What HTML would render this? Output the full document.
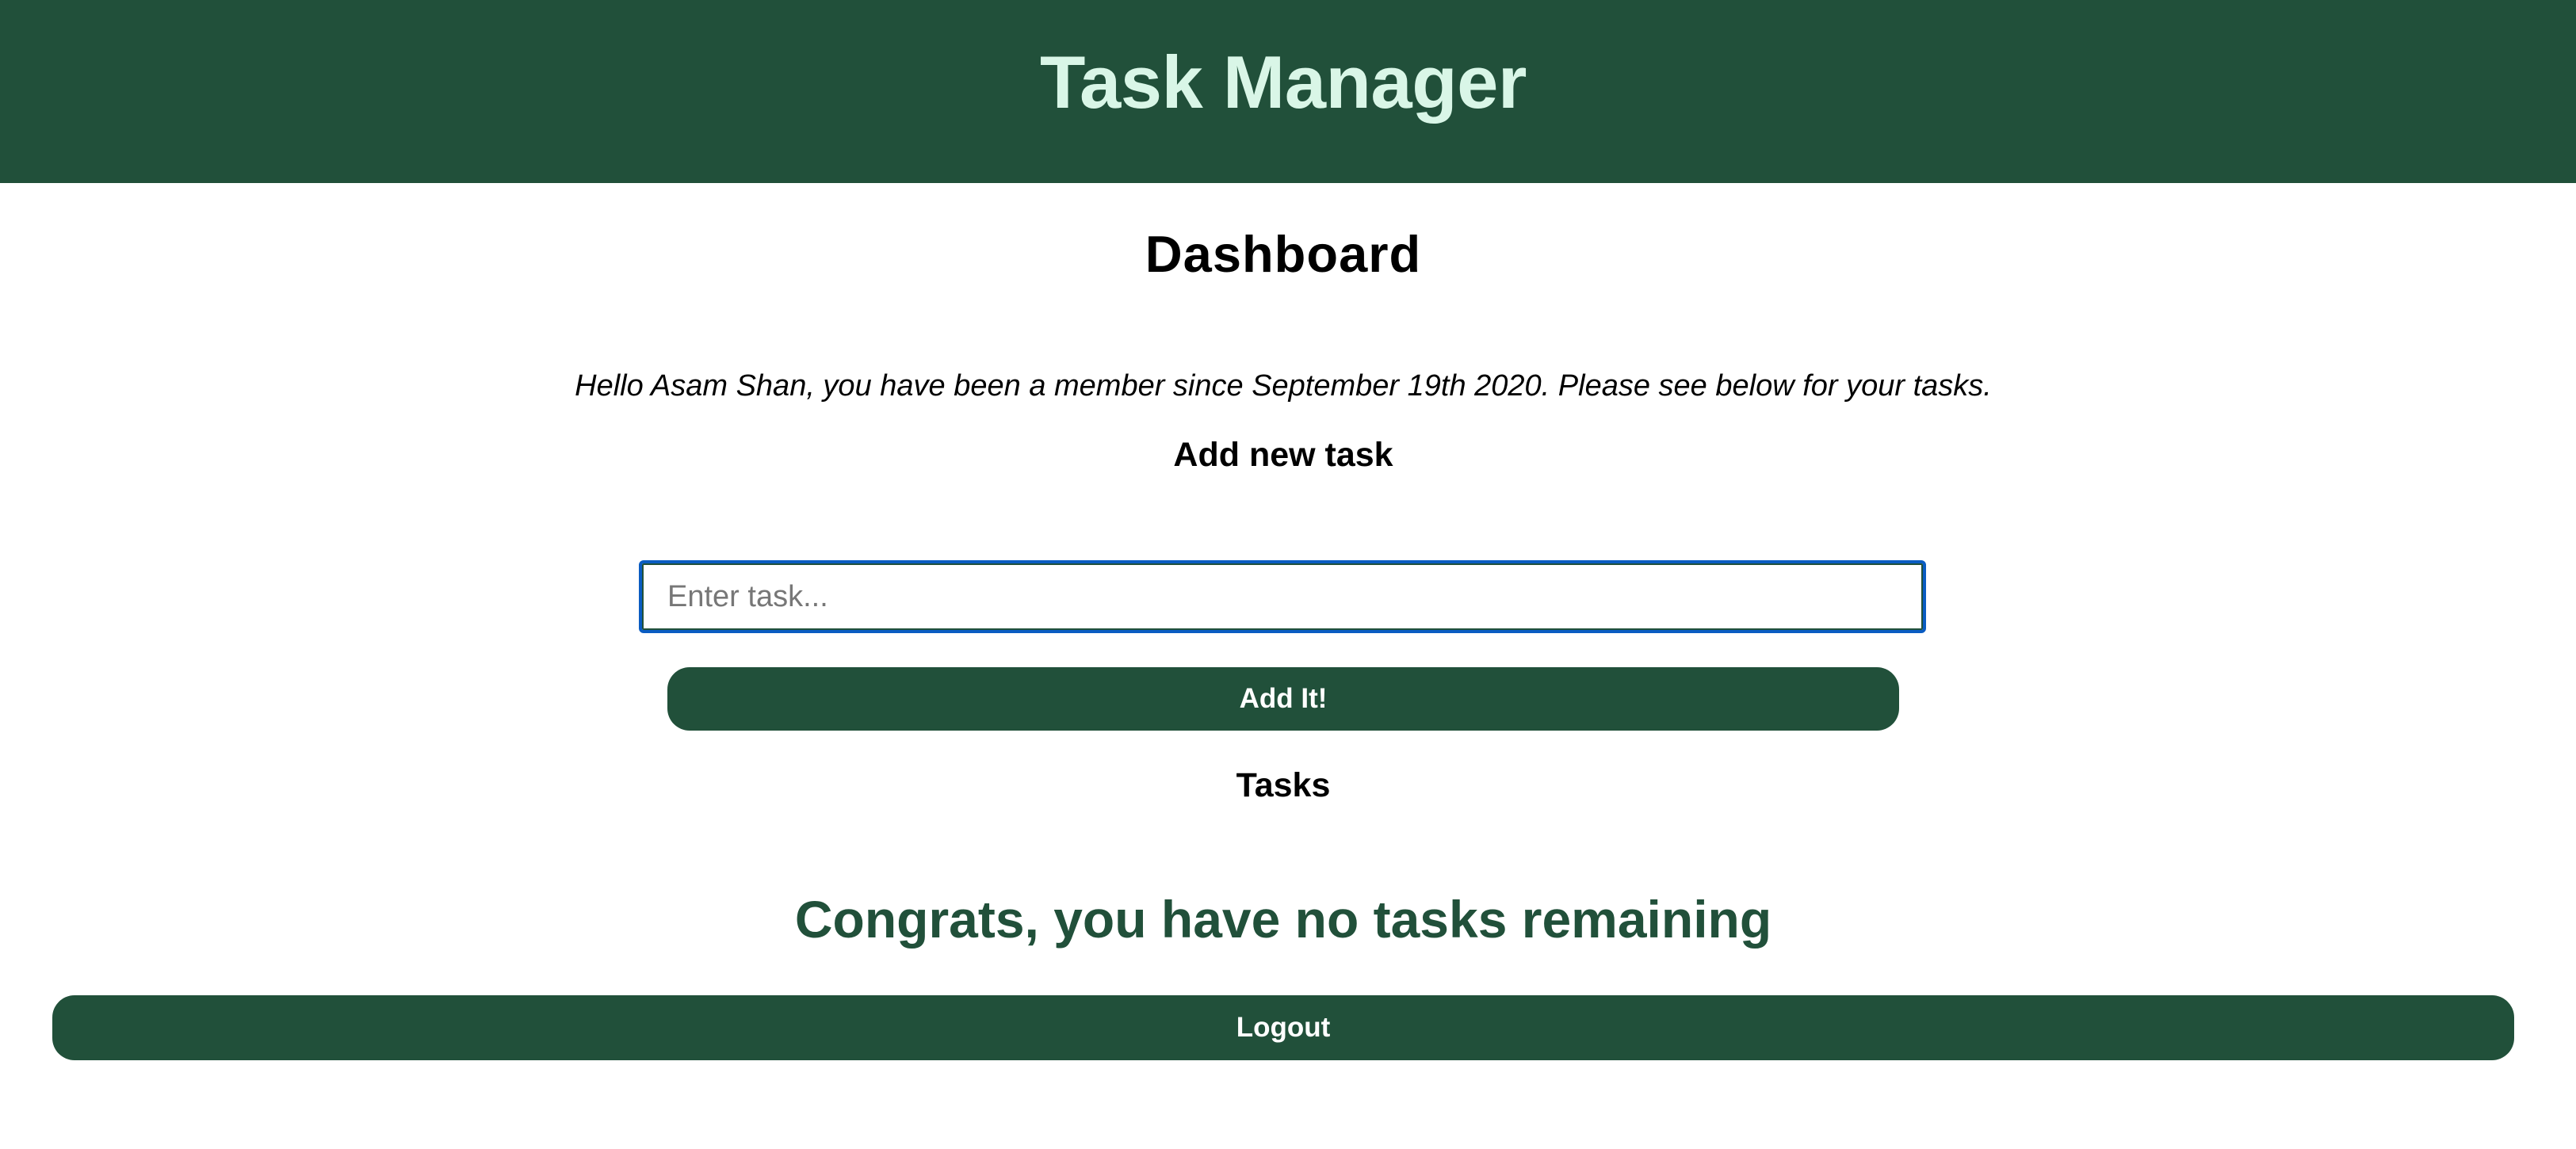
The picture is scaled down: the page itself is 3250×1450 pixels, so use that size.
<!DOCTYPE html>
<html><head><meta charset="utf-8"><style>
*{margin:0;padding:0;box-sizing:border-box}
body{width:3250px;height:1450px;background:#fff;font-family:"Liberation Sans",sans-serif;position:relative;overflow:hidden}
.hdr{position:absolute;left:0;top:0;width:3250px;height:231px;background:#21503a}
.c{position:absolute;left:0;width:3238px;text-align:center;white-space:nowrap}
.btn{position:absolute;background:#21503a;color:#fff;font-weight:bold;font-size:35px;text-align:center;border-radius:28px}
</style></head><body>
<div class="hdr"></div>
<div class="c" style="top:48px;font-size:94px;line-height:112px;color:#d9f6e7;font-weight:bold;letter-spacing:-0.5px">Task Manager</div>
<div class="c" style="top:283px;font-size:65px;line-height:76px;font-weight:900;letter-spacing:1px">Dashboard</div>
<div class="c" style="top:463px;font-size:38px;line-height:48px;font-style:italic;">Hello Asam Shan, you have been a member since September 19th 2020. Please see below for your tasks.</div>
<div class="c" style="top:548px;font-size:43px;line-height:52px;font-weight:bold">Add new task</div>
<div style="position:absolute;left:806px;top:707px;width:1624px;height:92px;border:4px solid #0a5cc2;border-radius:6px;box-shadow:inset 0 0 0 2px #21503a"></div>
<div style="position:absolute;left:842px;top:730px;font-size:38px;line-height:46px;color:#777">Enter task...</div>
<div class="btn" style="left:842px;top:842px;width:1554px;height:80px;line-height:80px">Add It!</div>
<div class="c" style="top:965px;font-size:43px;line-height:52px;font-weight:bold">Tasks</div>
<div class="c" style="top:1120px;font-size:66px;line-height:80px;font-weight:900;color:#21503a">Congrats, you have no tasks remaining</div>
<div class="btn" style="left:66px;top:1256px;width:3106px;height:82px;line-height:82px">Logout</div>
</body></html>
